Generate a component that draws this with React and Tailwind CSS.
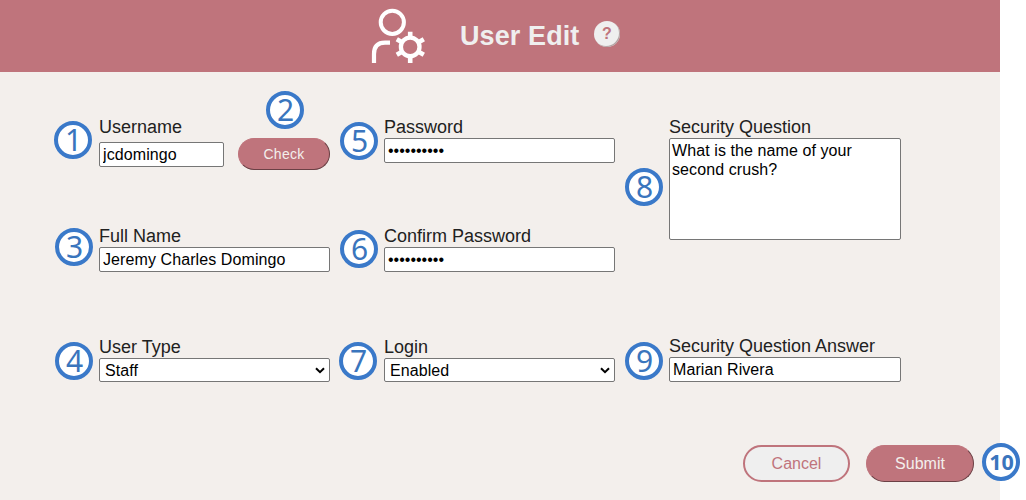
import React from 'react';

const control =
  'block w-full rounded-[2px] border border-[#767676] bg-white text-[16px] tracking-[0.09px] text-black outline-none';

function Badge({ n, className }) {
  return (
    <span
      className={
        "absolute flex h-[38px] w-[38px] items-center justify-center rounded-full border-4 border-[#3a79c9] bg-white pl-px font-[family-name:'Noto_Sans','Open_Sans',sans-serif] leading-none text-[#3a75bd] " +
        className
      }
    >
      {n}
    </span>
  );
}

function Field({ label, badge, badgeClass, className = '', children }) {
  return (
    <div className={'relative ' + className}>
      <Badge n={badge} className={'text-[30px] ' + badgeClass} />
      <label className="block text-[18px] leading-[22px] text-[#212121]">{label}</label>
      {children}
    </div>
  );
}

function TextInput({ value, type = 'text', className = '' }) {
  return (
    <input
      type={type}
      defaultValue={value}
      className={control + ' h-[25px] px-[3px] leading-[18px] ' + className}
    />
  );
}

function Select({ value }) {
  return (
    <div className="relative">
      <select className={control + ' h-6 appearance-none pt-[2px] pl-[5px] leading-[18px]'}>
        <option>{value}</option>
      </select>
      <svg className="pointer-events-none absolute top-[9px] right-[5px]" width="10" height="7" viewBox="0 0 10 7">
        <path d="M1 1.2 L5 5.2 L9 1.2" fill="none" stroke="#000" strokeWidth="2" />
      </svg>
    </div>
  );
}

function UserGearIcon() {
  return (
    <svg width="56" height="56" viewBox="0 0 56 56" fill="none" stroke="#fff">
      <circle cx="21.3" cy="14.3" r="11.6" strokeWidth="4" />
      <path d="M3 55 V46 Q3 34.6 14 34.6 H19" strokeWidth="4.2" />
      <circle cx="39.2" cy="38.9" r="9.3" strokeWidth="4.3" />
      <path
        d="M39.2 23.7 V30 M39.2 48 V55 M25.8 31.2 L31.5 34.5 M47.1 43.5 L52.8 46.8 M25.8 46.8 L31.5 43.5 M47.1 34.5 L52.8 31.2"
        strokeWidth="4.6"
      />
    </svg>
  );
}

export default function App() {
  return (
    <div className="h-[500px] w-[1026px] overflow-hidden bg-white font-[family-name:'Liberation_Sans',Arial,sans-serif]">
      <div className="flex h-full w-[1000px] flex-col bg-[#f3efec]">
        <header className="flex h-[72px] shrink-0 items-center bg-[#bf747c] pl-[371px]">
          <UserGearIcon />
          <h1 className="mb-px ml-[33px] w-[119px] text-[27px] leading-8 font-bold tracking-[0.1px] whitespace-nowrap text-[#efefef]">
            User Edit
          </h1>
          <button className="mb-1 ml-[15px] flex h-[26px] w-[26px] items-center justify-center rounded-full bg-[#efefef] text-[16px] leading-none font-bold text-[#bf747c] shadow-[inset_-1px_-1px_0_#b5a5a6]">
            ?
          </button>
        </header>

        <main className="flex h-[373px] shrink-0 gap-[54px] pt-11 pl-[99px]">
          <section className="w-[231px]">
            <Field label="Username" badge="1" badgeClass="-left-[45px] top-[5px]" className="h-[109px]">
              <div className="flex gap-[14px]">
                <div className="w-[125px] pt-1">
                  <TextInput value="jcdomingo" />
                </div>
                <div className="relative">
                  <Badge n="2" className="-top-[47px] left-[28px] text-[30px]" />
                  <button className="h-8 w-[92px] rounded-full border border-t-[#bf747c] border-r-[#6b4045] border-b-[#6b4045] border-l-[#bf747c] bg-[#bf747c] text-[14px] tracking-[0.3px] text-[#f3efec]">
                    Check
                  </button>
                </div>
              </div>
            </Field>
            <Field label="Full Name" badge="3" badgeClass="-left-[44px] top-[3px]" className="h-[111px]">
              <TextInput value="Jeremy Charles Domingo" />
            </Field>
            <Field label="User Type" badge="4" badgeClass="-left-[44px] top-[6px]">
              <Select value="Staff" />
            </Field>
          </section>

          <section className="w-[231px]">
            <Field label="Password" badge="5" badgeClass="-left-[44px] top-[6px]" className="h-[109px]">
              <TextInput type="password" value="secret1234" className="tracking-normal" />
            </Field>
            <Field label="Confirm Password" badge="6" badgeClass="-left-[44px] top-[5px]" className="h-[111px]">
              <TextInput type="password" value="secret1234" className="tracking-normal" />
            </Field>
            <Field label="Login" badge="7" badgeClass="-left-[45px] top-[6px]">
              <Select value="Enabled" />
            </Field>
          </section>

          <section className="w-[232px]">
            <Field label="Security Question" badge="8" badgeClass="-left-[44px] top-[52px]" className="h-[219px]">
              <textarea
                className={control + ' h-[102px] resize-none px-[2px] py-[2px] leading-[19px]'}
                defaultValue="What is the name of your second crush?"
              />
            </Field>
            <Field label="Security Question Answer" badge="9" badgeClass="-left-[44px] top-[7px]">
              <TextInput value="Marian Rivera" />
            </Field>
          </section>
        </main>

        <footer className="flex gap-4 pl-[743px]">
          <button className="h-[37px] w-[107px] rounded-full border-2 border-[#bf747c] bg-[#efefef] text-[16px] text-[#bf747c]">
            Cancel
          </button>
          <div className="relative">
            <button className="h-[37px] w-[108px] rounded-full border border-t-[#bf747c] border-r-[#6b4045] border-b-[#6b4045] border-l-[#bf747c] bg-[#bf747c] text-[16px] text-[#f3efec]">
              Submit
            </button>
            <Badge n="10" className="-top-[2px] left-[116px] text-[21.5px] font-bold" />
          </div>
        </footer>
      </div>
    </div>
  );
}
